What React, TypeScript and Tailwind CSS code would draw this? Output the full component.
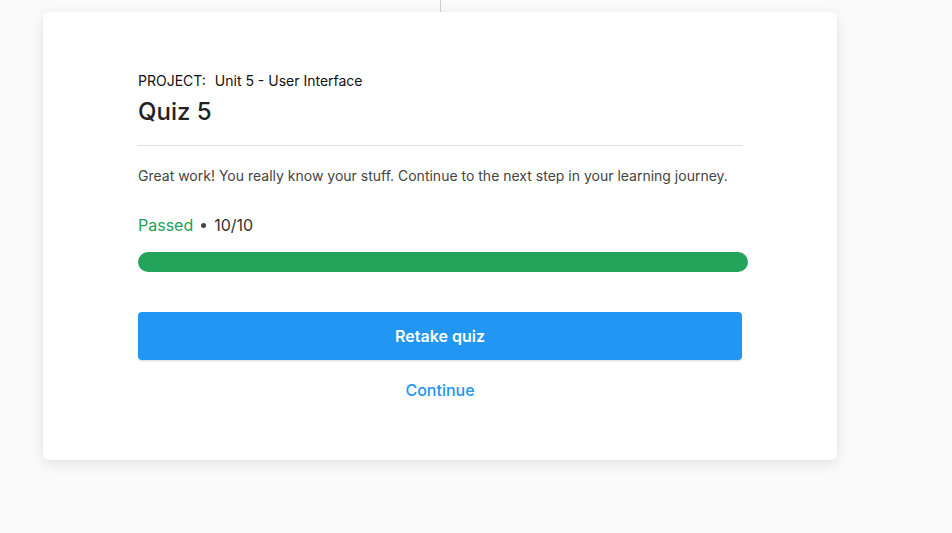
import React from 'react'

// Quiz result card
function QuizResult() {
  return (
    <div className="ml-[43px] w-[794px] rounded-md bg-white shadow-[0_4px_14px_rgba(0,0,0,0.10)] px-[95px] pt-[59px] pb-[58px]">
      <div className="flex items-center text-[14px] leading-[20px] text-[#111]">
        <span>PROJECT:</span>
        <span className="ml-[9px]">Unit 5 - User Interface</span>
      </div>
      <h1 className="mt-[5px] text-[24px] leading-[32px] font-medium text-[#222]">Quiz 5</h1>
      <div className="mt-[17px] h-px bg-[#e0e0e0]" />
      <p className="mt-[20px] text-[14px] leading-[20px] text-[#444]">
        Great work! You really know your stuff. Continue to the next step in your learning journey.
      </p>
      <div className="mt-[27px] flex items-center text-[16px] leading-[24px]">
        <span className="text-[#22a05a]">Passed</span>
        <span className="mx-[8px] h-[5px] w-[5px] rounded-full bg-[#444]" />
        <span className="text-[#333]">10/10</span>
      </div>
      <div className="mt-[15px] h-[20px] w-[610px] rounded-full bg-[#24a35a]" />
      <button className="mt-[40px] flex h-[48px] w-full items-center justify-center rounded bg-[#2196f3] text-[16px] font-semibold text-white shadow-[0_1px_2px_rgba(0,0,0,0.15)]">
        Retake quiz
      </button>
      <button className="mt-[18px] flex w-full justify-center text-[16px] leading-[24px] font-medium text-[#2196f3]">
        Continue
      </button>
    </div>
  )
}

export default function App() {
  return (
    <div className="min-h-[533px] bg-[#fafafa] font-['Inter',sans-serif]">
      <div className="ml-[440px] h-[12px] w-px bg-[#cfcfcf]" />
      <QuizResult />
    </div>
  )
}
